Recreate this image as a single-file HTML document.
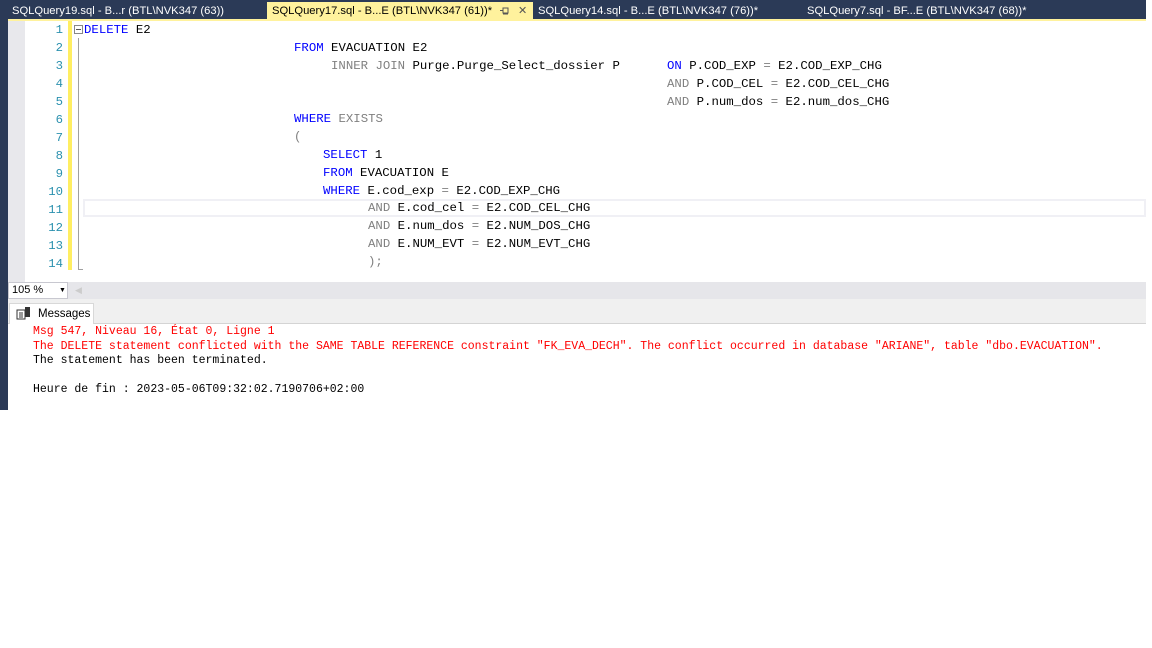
<!DOCTYPE html>
<html><head><meta charset="utf-8"><style>
*{margin:0;padding:0;box-sizing:border-box}
body{width:1152px;height:648px;background:#fff;position:relative;overflow:hidden;font-family:"Liberation Sans",sans-serif}
.a{position:absolute;white-space:pre}
.tabs{position:absolute;left:0;top:0;width:1146px;height:20px;background:#2b3a57}
.tab{position:absolute;top:2px;height:18px;font-size:11.2px;color:#fff;line-height:18px}
.code{font-family:"Liberation Mono",monospace;font-size:12.35px;line-height:18px;color:#000}
.k{color:#0000ff}.g{color:#808080}
.ln{color:#2b91af;font-family:"Liberation Mono",monospace;font-size:12.3px;width:20px;text-align:right}
.msg{font-family:"Liberation Mono",monospace;font-size:11.5px;color:#000}
.r{color:#ff0000}
</style></head><body>
<div class="tabs">
<div class="tab" style="left:12px">SQLQuery19.sql - B...r (BTL\NVK347 (63))</div>
<div class="tab" style="left:267px;width:266px;background:#fff29d;color:#000;padding-left:5px">SQLQuery17.sql - B...E (BTL\NVK347 (61))*<svg style="position:absolute;left:233px;top:5px" width="10" height="9"><rect x="3" y="1" width="5" height="5" fill="none" stroke="#555"/><line x1="0" y1="3.5" x2="3" y2="3.5" stroke="#555"/><line x1="3" y1="7" x2="8" y2="7" stroke="#555"/></svg><span style="position:absolute;left:251px;color:#555">✕</span></div>
<div class="tab" style="left:538px">SQLQuery14.sql - B...E (BTL\NVK347 (76))*</div>
<div class="tab" style="left:807px">SQLQuery7.sql - BF...E (BTL\NVK347 (68))*</div>
</div>
<div class="a" style="left:8px;top:19px;width:1138px;height:2px;background:#fff29d"></div>
<div class="a" style="left:0;top:20px;width:8px;height:390px;background:#2b3a57"></div>
<div class="a" style="left:8px;top:21px;width:17px;height:261px;background:#e8e8ec"></div>
<div class="a" style="left:68px;top:21px;width:4px;height:249px;background:#ffee62"></div>
<div class="a" style="left:78px;top:38px;width:1px;height:232px;background:#a0a0a0"></div>
<div class="a" style="left:78px;top:269px;width:5px;height:1px;background:#a0a0a0"></div>
<div class="a" style="left:74px;top:25px;width:9px;height:9px;border:1px solid #888;background:#fff"></div>
<div class="a" style="left:76px;top:29px;width:5px;height:1px;background:#555"></div>
<div class="a" style="left:83px;top:199px;width:1063px;height:18px;border:2px solid #f0f0f5"></div>
<div class="a ln" style="left:43px;top:21px;line-height:18px">1<br>2<br>3<br>4<br>5<br>6<br>7<br>8<br>9<br>10<br>11<br>12<br>13<br>14</div>
<div class="a code" style="left:84px;top:21px"><span class="k">DELETE</span> E2</div>
<div class="a code" style="left:294px;top:39px"><span class="k">FROM</span> EVACUATION E2</div>
<div class="a code" style="left:331px;top:57px"><span class="g">INNER JOIN</span> Purge.Purge_Select_dossier P</div>
<div class="a code" style="left:667px;top:57px"><span class="k">ON</span> P.COD_EXP <span class="g">=</span> E2.COD_EXP_CHG</div>
<div class="a code" style="left:667px;top:75px"><span class="g">AND</span> P.COD_CEL <span class="g">=</span> E2.COD_CEL_CHG</div>
<div class="a code" style="left:667px;top:93px"><span class="g">AND</span> P.num_dos <span class="g">=</span> E2.num_dos_CHG</div>
<div class="a code" style="left:294px;top:110px"><span class="k">WHERE</span> <span class="g">EXISTS</span></div>
<div class="a code" style="left:294px;top:128px"><span class="g">(</span></div>
<div class="a code" style="left:323px;top:146px"><span class="k">SELECT</span> 1</div>
<div class="a code" style="left:323px;top:164px"><span class="k">FROM</span> EVACUATION E</div>
<div class="a code" style="left:323px;top:182px"><span class="k">WHERE</span> E.cod_exp <span class="g">=</span> E2.COD_EXP_CHG</div>
<div class="a code" style="left:368px;top:199px"><span class="g">AND</span> E.cod_cel <span class="g">=</span> E2.COD_CEL_CHG</div>
<div class="a code" style="left:368px;top:217px"><span class="g">AND</span> E.num_dos <span class="g">=</span> E2.NUM_DOS_CHG</div>
<div class="a code" style="left:368px;top:235px"><span class="g">AND</span> E.NUM_EVT <span class="g">=</span> E2.NUM_EVT_CHG</div>
<div class="a code" style="left:368px;top:253px"><span class="g">);</span></div>
<div class="a" style="left:8px;top:282px;width:1138px;height:17px;background:#e6e6ea"></div>
<div class="a" style="left:8px;top:282px;width:60px;height:17px;background:#fff;border:1px solid #c8c8d0;font-size:11px;line-height:15px;padding-left:3px">105 %<span style="position:absolute;left:50px;font-size:7px">▼</span></div>
<div class="a" style="left:75px;top:285px;color:#ccc;font-size:9px">◀</div>
<div class="a" style="left:8px;top:299px;width:1138px;height:25px;background:#f0f0f0;border-bottom:1px solid #d4d4d4"></div>
<div class="a" style="left:9px;top:303px;width:85px;height:21px;background:#fff;border:1px solid #d8d8d8;border-bottom:none;font-size:11.5px;line-height:20px;padding-left:28px">Messages</div>
<svg class="a" style="left:16px;top:306px" width="16" height="14"><rect x="1" y="4" width="8" height="9" fill="#fff" stroke="#333"/><line x1="3" y1="7" x2="7" y2="7" stroke="#333"/><line x1="3" y1="9" x2="7" y2="9" stroke="#333"/><line x1="3" y1="11" x2="7" y2="11" stroke="#333"/><rect x="9" y="1" width="5" height="10" fill="#333"/></svg>
<div class="a msg r" style="left:33px;top:325px;line-height:14.5px">Msg 547, Niveau 16, État 0, Ligne 1
The DELETE statement conflicted with the SAME TABLE REFERENCE constraint "FK_EVA_DECH". The conflict occurred in database "ARIANE", table "dbo.EVACUATION".</div>
<div class="a msg" style="left:33px;top:354px;line-height:14.5px">The statement has been terminated.

Heure de fin : 2023-05-06T09:32:02.7190706+02:00</div>
</body></html>
